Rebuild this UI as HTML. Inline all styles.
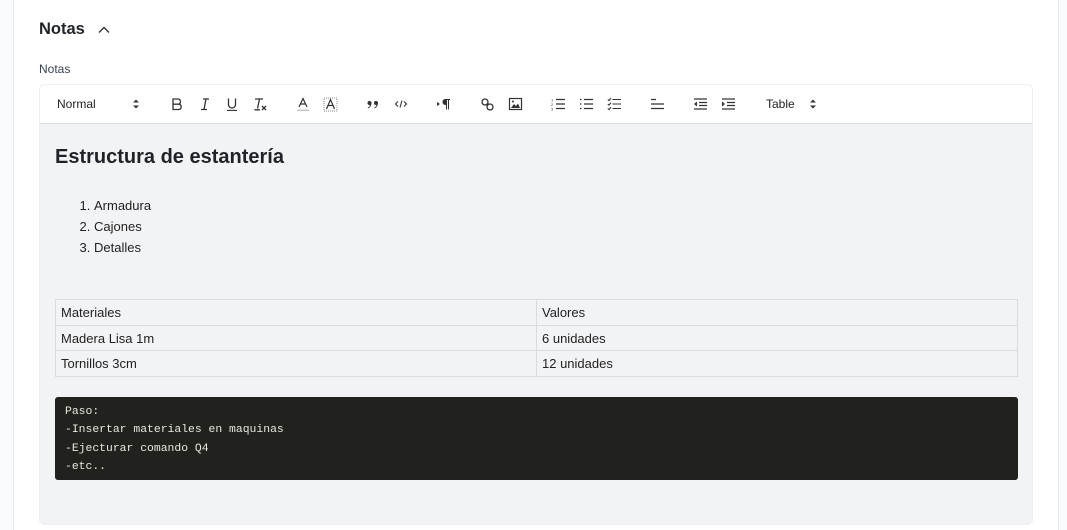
<!DOCTYPE html>
<html><head><meta charset="utf-8">
<style>
*{box-sizing:border-box;margin:0;padding:0}
html{width:1067px;height:530px;overflow:hidden}
body{width:1067px;height:530px;background:#f9fafb;font-family:"Liberation Sans",sans-serif;color:#1f2328;position:relative;overflow:hidden}
.card{position:absolute;left:13px;top:-10px;width:1046px;height:540px;background:#fff;border:1px solid #e5e7eb;border-bottom:none;border-radius:8px 8px 0 0}
.abs{position:absolute}
.h{left:39px;top:20px;font-size:16.5px;font-weight:bold;color:#1f2328}
.lbl{left:39px;top:62px;font-size:12px;color:#374151}
.ed{position:absolute;left:39px;top:84px;width:994px;height:441px;border:1px solid #eceef1;border-radius:6px;overflow:hidden;background:#f2f3f5}
.tb{position:absolute;left:0;top:0;width:100%;height:39px;background:#fff;border-bottom:1px solid #d9dce1}
.tb svg{position:absolute;top:12px}
.tt{position:absolute;top:12px;font-size:12px;color:#222}
h2{position:absolute;left:15px;top:61px;font-size:20px;font-weight:bold;color:#1f2328}
ol{position:absolute;left:54px;top:110px;font-size:13px;line-height:21px;color:#222}
table{position:absolute;left:15px;top:214px;width:963px;border-collapse:collapse;font-size:13px;color:#222}
td{border:1px solid #d9dbdf;height:25.7px;padding:0 5px;vertical-align:middle}
td:first-child{width:481px}
.code{position:absolute;left:15px;top:312px;width:963px;height:83px;background:#21211d;border-radius:3px;color:#e8e8e3;font-family:"Liberation Mono",monospace;font-size:11.4px;line-height:18.3px;padding:6px 10px}
</style></head><body>
<div class="card"></div>
<div class="abs h">Notas</div>
<svg class="abs" style="left:97px;top:24px" width="14" height="12" viewBox="0 0 14 12"><path d="M2 8.5L7 3.5L12 8.5" fill="none" stroke="#333" stroke-width="1.4"/></svg>
<div class="abs lbl">Notas</div>
<div class="ed">
 <div class="tb">
  <div class="tt" style="left:17px">Normal</div>
  <svg style="left:92px" width="8" height="14" viewBox="0 0 8 14"><path d="M1 5.5L4 2.5L7 5.5Z M1 8.5L4 11.5L7 8.5Z" fill="#333"/></svg>
  <svg style="left:130px" width="14" height="14" viewBox="0 0 14 14" fill="none" stroke="#333" stroke-width="1.3"><path d="M3 2H8.5a2.7 2.7 0 0 1 0 5.2H3ZM3 7.2H9a2.7 2.7 0 0 1 0 5.3H3Z"/></svg>
  <svg style="left:158px" width="14" height="14" viewBox="0 0 14 14" fill="none" stroke="#333" stroke-width="1.3"><path d="M5 2H11M3 12.5H9M8 2L6 12.5"/></svg>
  <svg style="left:185px" width="14" height="14" viewBox="0 0 14 14" fill="none" stroke="#333" stroke-width="1.3"><path d="M3.5 1.5V7.5a3.5 3.5 0 0 0 7 0V1.5M2 13.5H12"/></svg>
  <svg style="left:213px" width="15" height="15" viewBox="0 0 15 15" fill="none" stroke="#333" stroke-width="1.3"><path d="M2 2H10M6.5 2L4.5 11.5M1.5 12.8H7M9 9L13 13M13 9L9 13"/></svg>
  <svg style="left:256px" width="14" height="15" viewBox="0 0 14 15" fill="none"><path d="M3 10L7 1.5L11 10M4.5 7H9.5" stroke="#333" stroke-width="1.2"/><rect x="1" y="12.5" width="12" height="1.6" fill="#c8c8c8"/></svg>
  <svg style="left:283px" width="15" height="15" viewBox="0 0 15 15" fill="none"><rect x="1" y="1" width="13" height="13" fill="none" stroke="#888" stroke-width="1" stroke-dasharray="1 1"/><path d="M3.5 12L7.5 2.5L11.5 12M5 8.5H10" stroke="#333" stroke-width="1.2"/></svg>
  <svg style="left:326px" width="14" height="14" viewBox="0 0 14 14" fill="#333"><circle cx="3.5" cy="6" r="2"/><path d="M5.4 6C5.4 9 4 10.5 2 11.5L1.7 10.8C3.5 9.8 4 8.5 4 7Z"/><circle cx="10" cy="6" r="2"/><path d="M11.9 6C11.9 9 10.5 10.5 8.5 11.5L8.2 10.8C10 9.8 10.5 8.5 10.5 7Z"/></svg>
  <svg style="left:354px" width="14" height="14" viewBox="0 0 14 14" fill="none" stroke="#333" stroke-width="1.1"><path d="M4 4.5L1.5 7L4 9.5M10 4.5L12.5 7L10 9.5M8 3.5L6 10.5"/></svg>
  <svg style="left:396px" width="15" height="14" viewBox="0 0 15 14" fill="#333"><path d="M1 5L4 7L1 9Z"/><path d="M9 2H14V3H13V12.5H12V3H11V12.5H10V8A3 3 0 0 1 9 2Z"/></svg>
  <svg style="left:440px" width="15" height="15" viewBox="0 0 15 15" fill="none" stroke="#333" stroke-width="1.3"><path d="M6.5 8.5L8.5 6.5"/><circle cx="5" cy="5" r="3" /><circle cx="10" cy="10" r="3"/></svg>
  <svg style="left:468px" width="15" height="14" viewBox="0 0 15 14" fill="none"><rect x="1.5" y="1.5" width="12" height="11" stroke="#333" stroke-width="1.2"/><path d="M3 11L6 7L8 9L10 6.5L12 11Z" fill="#333"/><circle cx="5" cy="4.5" r="1" fill="#333"/></svg>
  <svg style="left:511px" width="15" height="14" viewBox="0 0 15 14" fill="none" stroke="#333" stroke-width="1.3"><path d="M5 2.5H14M5 7H14M5 11.5H14"/><text x="0" y="4.5" font-size="4" fill="#333" stroke="none" font-family="Liberation Sans">1</text><text x="0" y="9" font-size="4" fill="#333" stroke="none" font-family="Liberation Sans">2</text><text x="0" y="13.5" font-size="4" fill="#333" stroke="none" font-family="Liberation Sans">3</text></svg>
  <svg style="left:539px" width="15" height="14" viewBox="0 0 15 14" fill="none" stroke="#333" stroke-width="1.3"><path d="M5 2.5H14M5 7H14M5 11.5H14M1 2.5H2.5M1 7H2.5M1 11.5H2.5"/></svg>
  <svg style="left:567px" width="15" height="14" viewBox="0 0 15 14" fill="none" stroke="#333" stroke-width="1.1"><path d="M5.5 2.5H14M5.5 7H14M5.5 11.5H14M0.8 2.5L2 3.6L4 1.2M0.8 7L2 8.1L4 5.7M0.8 11.5L2 12.6L4 10.2"/></svg>
  <svg style="left:610px" width="15" height="14" viewBox="0 0 15 14" fill="none" stroke="#333" stroke-width="1.3"><path d="M1 2.5H6M1 7H14M1 11.5H14"/></svg>
  <svg style="left:653px" width="15" height="14" viewBox="0 0 15 14" fill="none" stroke="#333" stroke-width="1.3"><path d="M1 2H14M6 5.5H14M6 8.5H14M1 12H14"/><path d="M4 4.5L1 7L4 9.5Z" fill="#333" stroke="none"/></svg>
  <svg style="left:681px" width="15" height="14" viewBox="0 0 15 14" fill="none" stroke="#333" stroke-width="1.3"><path d="M1 2H14M6 5.5H14M6 8.5H14M1 12H14"/><path d="M1 4.5L4 7L1 9.5Z" fill="#333" stroke="none"/></svg>
  <div class="tt" style="left:726px">Table</div>
  <svg style="left:769px" width="8" height="14" viewBox="0 0 8 14"><path d="M1 5.5L4 2.5L7 5.5Z M1 8.5L4 11.5L7 8.5Z" fill="#333"/></svg>
 </div>
 <h2>Estructura de estantería</h2>
 <ol><li>Armadura</li><li>Cajones</li><li>Detalles</li></ol>
 <table>
  <tr><td>Materiales</td><td>Valores</td></tr>
  <tr><td>Madera Lisa 1m</td><td>6 unidades</td></tr>
  <tr><td>Tornillos 3cm</td><td>12 unidades</td></tr>
 </table>
 <div class="code">Paso:<br>-Insertar materiales en maquinas<br>-Ejecturar comando Q4<br>-etc..</div>
</div>
</body></html>
